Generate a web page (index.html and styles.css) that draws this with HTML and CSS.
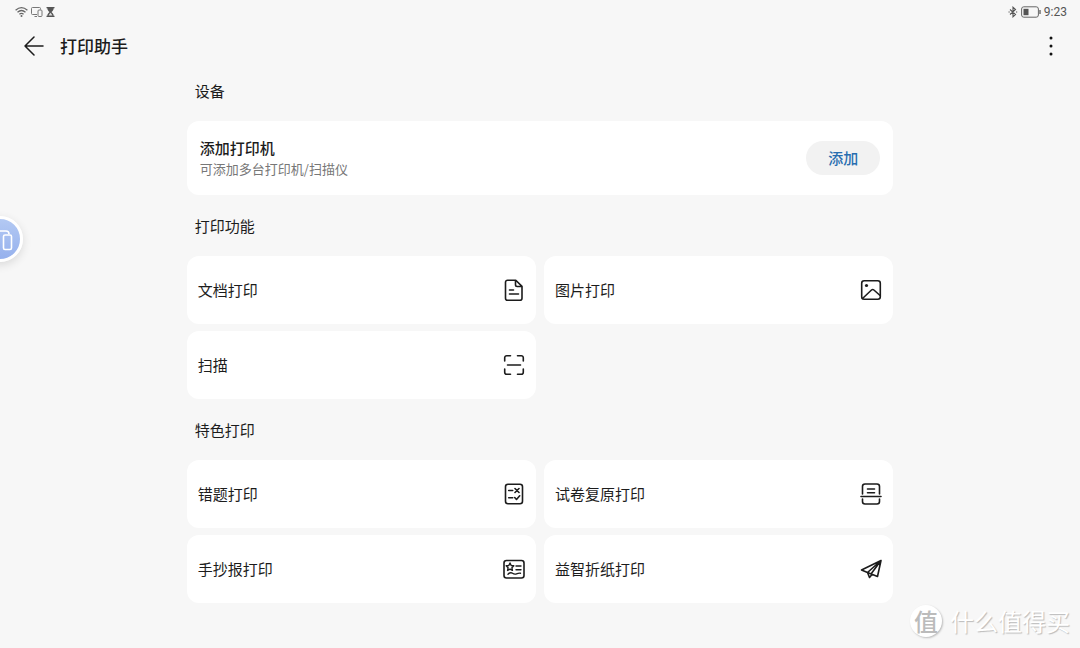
FILE: index.html
```html
<!DOCTYPE html>
<html lang="zh-CN">
<head>
<meta charset="utf-8">
<meta name="viewport" content="width=device-width, initial-scale=1">
<title>打印助手</title>
<link rel="stylesheet" href="styles.css">
</head>
<body>
<div class="status">
  <div class="status-group">
    <svg width="13" height="12" viewBox="0 0 13 12" fill="none" stroke="#666" stroke-width="1.3"><path d="M.6 4.2Q6.5-.9 12.4 4.2M2.5 6.2Q6.5 2.8 10.5 6.2M4.4 8.2Q6.5 6.6 8.6 8.2"/><circle cx="6.5" cy="10" r="1" fill="#666" stroke="none"/></svg>
    <svg width="12" height="12" viewBox="0 0 12 12" fill="none" stroke="#777"><path d="M6 8.5H1.5Q.5 8.500.5 7.500V2.500Q.5 1.500 1.500 1.500H8.500Q9.500 1.500 9.500 2.500V3.500M3.500 10.500H6"/><rect x="7" y="4" width="4" height="6.500" rx="1"/></svg>
    <svg width="9" height="12" viewBox="0 0 9 12" fill="#555"><path d="M.5 1h8v1.200h-.8C7.700 4.200 6.300 5.200 5.500 6c.8.8 2.200 1.800 2.200 3.800h.8V11h-8V9.800h.8C1.300 7.800 2.700 6.800 3.500 6 2.700 5.200 1.300 4.200 1.300 2.200H.5z"/><path d="M4.500 6.800 6.500 9.500h-4z" fill="#ddd"/></svg>
  </div>
  <div class="status-group">
    <svg width="10" height="12" viewBox="0 0 10 12" fill="none" stroke="#555" stroke-width="1.100"><path d="m2 3.500 5.500 5L5 10.800V1.200l2.500 2.300L2 8.500M.5 6h1.200M8 6h1.200"/></svg>
    <svg width="20" height="12" viewBox="0 0 20 12" fill="none" stroke="#666"><rect x=".6" y=".8" width="16.800" height="10.400" rx="2.200"/><rect x="2.500" y="2.800" width="5" height="6.400" fill="#555" stroke="none"/><path d="M19 4v4" stroke-width="1.400"/></svg>
    <span class="clock">9:23</span>
  </div>
</div>

<header class="topbar">
  <button class="icon-button" aria-label="返回">
    <svg width="20" height="20" viewBox="0 0 20 20" fill="none" stroke="#1c1c1c" stroke-width="1.500" stroke-linecap="round" stroke-linejoin="round"><path d="M10 1 1 10l9 9M1 10h18"/></svg>
  </button>
  <h1 class="page-title">打印助手</h1>
  <button class="icon-button more" aria-label="更多">
    <svg width="4" height="20" viewBox="0 0 4 20" fill="#111"><circle cx="2" cy="2" r="1.500"/><circle cx="2" cy="10" r="1.500"/><circle cx="2" cy="18" r="1.500"/></svg>
  </button>
</header>

<main class="content">
  <h2 class="section-title">设备</h2>
  <section class="device-card">
    <div>
      <h3 class="device-name">添加打印机</h3>
      <p class="device-note">可添加多台打印机/扫描仪</p>
    </div>
    <button class="add-button">添加</button>
  </section>

  <h2 class="section-title">打印功能</h2>
  <div class="tiles">
    <button class="tile">文档打印
      <svg class="tile-icon" viewBox="0 0 24 24"><path d="M5.500 2.200h8.300l6.200 6.200v11.800a2 2 0 0 1-2 2h-12.500a2 2 0 0 1-2-2v-16a2 2 0 0 1 2-2zM13.500 2.500V6.800q0 1.700 1.700 1.700h4.500M7.500 12h4M7.500 16h9"/></svg>
    </button>
    <button class="tile">图片打印
      <svg class="tile-icon" viewBox="0 0 24 24"><rect x="2.700" y="2.700" width="18.600" height="18.600" rx="2.500"/><path d="m3.500 20.500 9-8.500q1.200-1 2.400 0l6.200 5.500"/><circle class="solid" cx="7.500" cy="7.500" r="1.600"/></svg>
    </button>
    <button class="tile">扫描
      <svg class="tile-icon" viewBox="0 0 24 24"><path d="M2.700 8V4.700a2 2 0 0 1 2-2H8.500M15.500 2.700h3.800a2 2 0 0 1 2 2V8M21.300 16v3.300a2 2 0 0 1-2 2h-3.800M8.500 21.300H4.700a2 2 0 0 1-2-2V16M5.500 12h13"/></svg>
    </button>
  </div>

  <h2 class="section-title">特色打印</h2>
  <div class="tiles">
    <button class="tile">错题打印
      <svg class="tile-icon" viewBox="0 0 24 24"><rect x="3.500" y="2.200" width="17" height="19.600" rx="2.500"/><path d="M6.700 8.500h4M13 6.500l4 4M17 6.500l-4 4M6.700 15.800h4M12.700 15.500l1.800 2 3.200-3.700"/></svg>
    </button>
    <button class="tile">试卷复原打印
      <svg class="tile-icon" viewBox="0 0 24 24"><path d="M3.500 12V4.500a2.500 2.500 0 0 1 2.500-2.500h12a2.500 2.500 0 0 1 2.500 2.500V12M2 14.500h20M3.500 17v2.500A2.500 2.500 0 0 0 6 22h12a2.500 2.500 0 0 0 2.500-2.500V17M8.500 7h7M8.500 10.700h7"/></svg>
    </button>
    <button class="tile">手抄报打印
      <svg class="tile-icon" viewBox="0 0 24 24"><rect x="2" y="3.500" width="20" height="17.500" rx="2.500"/><path d="m8 6 1.200 2.500 2.600.3-1.900 1.900.5 2.700L8 12.200l-2.400 1.200.5-2.700-1.900-1.900 2.600-.3zM14 9h5M14 12.700h5M6 17.200q2.500-2.400 4.500-1t4 .6 4-.6" stroke-width="1.400"/></svg>
    </button>
    <button class="tile">益智折纸打印
      <svg class="tile-icon" viewBox="0 0 24 24"><path d="M22 3.500 2.500 13l6 2.500 10 4zM22 3.500 8.500 15.500l2 5 2.500-3M22 3.500 12 17"/></svg>
    </button>
  </div>
</main>

<button class="float-ball" aria-label="多屏协同">
  <svg width="24" height="24" viewBox="0 0 24 24" fill="none" stroke="#fff" stroke-width="1.600"><path d="M0 4h15q3 0 3 3M0 17h9"/><rect x="12.500" y="8" width="8" height="14.500" rx="1.500"/></svg>
</button>

<div class="watermark">
  <span class="watermark-badge">值</span>
  <span>什么值得买</span>
</div>
</body>
</html>
```

FILE: styles.css
```css
* {
  box-sizing: border-box;
}

body {
  position: relative;
  margin: 0;
  min-height: 100vh;
  background: #f7f7f7;
  color: #1c1c1c;
  font-family: "Noto Sans CJK SC", "Noto Sans", sans-serif;
  overflow-x: hidden;
}

button {
  margin: 0;
  border: 0;
  font: inherit;
  color: inherit;
  cursor: pointer;
}

h1, h2, h3, p {
  margin: 0;
  font-weight: 400;
}

svg {
  display: block;
  flex: none;
}

.status {
  display: flex;
  justify-content: space-between;
  height: 22px;
  padding: 2px 13px 0 15px;
}

.status-group {
  display: flex;
  align-items: center;
  gap: 3px;
}

.clock {
  color: #555;
  font-family: Roboto, sans-serif;
  font-size: 12px;
  line-height: 16px;
}

.topbar {
  display: flex;
  align-items: center;
  height: 38px;
  padding: 9px 21px 0 20px;
}

.icon-button {
  display: flex;
  justify-content: center;
  padding: 4px;
  background: none;
}

.page-title {
  margin-left: 12px;
  font-size: 17px;
  font-weight: 500;
  line-height: 24px;
}

.more {
  width: 16px;
  margin-left: auto;
}

.content {
  width: 65.4%;
  margin: 0 auto;
  padding-bottom: 45px;
}

.section-title {
  padding: 20px 8px 19px;
  font-size: 15px;
  line-height: 22px;
}

.device-card {
  display: flex;
  align-items: center;
  justify-content: space-between;
  padding: 16px 13px;
  border-radius: 12px;
  background: #fff;
}

.device-name {
  font-size: 15px;
  font-weight: 500;
  line-height: 22px;
}

.device-note {
  color: #777;
  font-size: 13px;
  line-height: 20px;
}

.add-button {
  padding: 6px 22px;
  border-radius: 17px;
  background: #f2f2f2;
  color: #286eb0;
  font-size: 15px;
  font-weight: 500;
  line-height: 22px;
}

.tiles {
  display: grid;
  grid-template-columns: 1fr 1fr;
  gap: 7px 8px;
}

.tile {
  display: flex;
  align-items: center;
  justify-content: space-between;
  padding: 22px 10px 22px 11px;
  border-radius: 12px;
  background: #fff;
  font-size: 15px;
  line-height: 24px;
  text-align: left;
}

.tile-icon {
  width: 24px;
  height: 24px;
  fill: none;
  stroke: #1c1c1c;
  stroke-width: 1.6;
  stroke-linecap: round;
  stroke-linejoin: round;
}

.tile-icon .solid {
  fill: #1c1c1c;
  stroke: none;
}

.float-ball {
  position: absolute;
  top: 216px;
  left: -23px;
  display: flex;
  align-items: center;
  justify-content: flex-end;
  width: 46px;
  height: 46px;
  padding: 0 5px 0 0;
  border: 3px solid #fff;
  border-radius: 50%;
  background: linear-gradient(#b3c9f3, #96b1ed);
  box-shadow: 0 3px 10px rgba(0, 0, 0, 0.12);
}

.watermark {
  position: absolute;
  right: 10px;
  bottom: 10px;
  display: flex;
  align-items: center;
  gap: 8px;
  color: #fff;
  font-size: 24px;
  line-height: 34px;
  text-shadow: 1px 1px 1px #bbb;
}

.watermark-badge {
  width: 32px;
  height: 32px;
  border-radius: 50%;
  background: #fff;
  box-shadow: 1px 1px 2px #bbb;
  color: #bbb;
  font-weight: 500;
  line-height: 32px;
  text-align: center;
  text-shadow: none;
}
```
